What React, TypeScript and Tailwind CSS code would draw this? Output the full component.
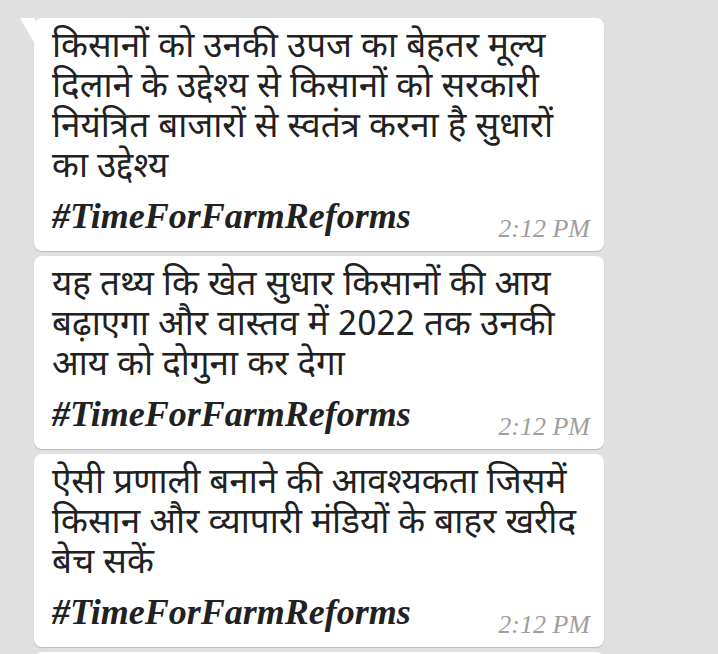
const messages = [
  {
    lines: [
      'किसानों को उनकी उपज का बेहतर मूल्य',
      'दिलाने के उद्देश्य से किसानों को सरकारी',
      'नियंत्रित बाजारों से स्वतंत्र करना है सुधारों',
      'का उद्देश्य',
    ],
    time: '2:12 PM',
  },
  {
    lines: [
      'यह तथ्य कि खेत सुधार किसानों की आय',
      'बढ़ाएगा और वास्तव में 2022 तक उनकी',
      'आय को दोगुना कर देगा',
    ],
    time: '2:12 PM',
  },
  {
    lines: [
      'ऐसी प्रणाली बनाने की आवश्यकता जिसमें',
      'किसान और व्यापारी मंडियों के बाहर खरीद',
      'बेच सकें',
    ],
    time: '2:12 PM',
  },
];

const hindi = { fontFamily: '"Noto Sans Devanagari", "Noto Sans", "Lohit Devanagari", sans-serif' };
const serif = { fontFamily: '"Liberation Serif", serif' };

const Bubble = ({ lines, time, first }: { lines: string[]; time: string; first?: boolean }) => (
  <div className="relative w-[570px] rounded-lg bg-white pl-[18px] pr-[14px] pt-[11px] pb-[12px] shadow-[0_1px_1px_rgba(0,0,0,0.18)]">
    {first && (
      <svg className="absolute -left-[14px] top-0" width="15" height="26" viewBox="0 0 15 26">
        <path d="M0 0 H15 V26 Z" fill="#ffffff" />
      </svg>
    )}
    <p className="text-[35px] leading-[40px] whitespace-nowrap text-[#212121]" style={hindi}>
      {lines.map((l, i) => (
        <span key={i}>
          {i > 0 && <br />}
          {l}
        </span>
      ))}
    </p>
    <div className="mt-[5px] flex items-baseline">
      <span className="text-[36px] leading-[44px] font-bold italic text-[#212121]" style={serif}>
        #TimeForFarmReforms
      </span>
      <span className="ml-auto translate-y-[9px] text-[26px] italic text-[#9e9e9e]" style={serif}>
        {time}
      </span>
    </div>
  </div>
);

export default function App() {
  return (
    <div className="h-[654px] w-[718px] overflow-hidden bg-[#e0e0e0] pl-[34px] pt-[18px]">
      <div className="flex flex-col gap-[5px]">
        {messages.map((m, i) => (
          <Bubble key={i} lines={m.lines} time={m.time} first={i === 0} />
        ))}
        <div className="h-[60px] w-[570px] rounded-lg bg-white shadow-[0_1px_1px_rgba(0,0,0,0.18)]" />
      </div>
    </div>
  );
}
